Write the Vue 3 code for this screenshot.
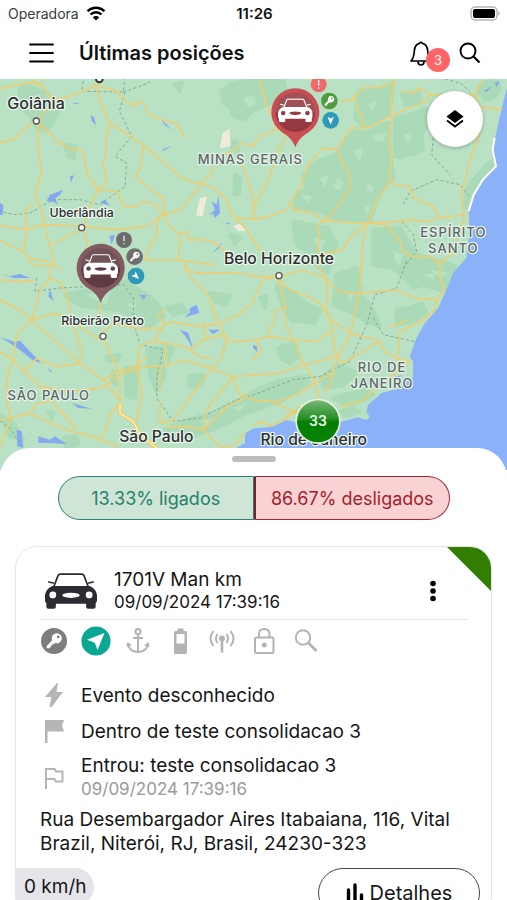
<script setup>
import { ref } from 'vue'

const alerts = ref(3)
const vehicle = {
  name: '1701V Man km',
  updated: '09/09/2024 17:39:16',
  address: 'Rua Desembargador Aires Itabaiana, 116, Vital Brazil, Niterói, RJ, Brasil, 24230-323',
  speed: '0 km/h'
}

/* Map artwork is split in four tiles, each with its own origin. */
const tiles = [
  {
    x: 0, y: 0,
    roads: [
      'M0 193L40 185L70 155L108 128L118 120L145 88L150 60L130 25L95 5',
      'M0 32L80 14L130 20',
      'M150 65L190 60L245 42L285 20L350 40L380 72L405 85L412 68L432 78L445 110L500 130L530 135L553 178',
      'M285 20L305 80L330 135L395 178L440 210L480 245L540 295L575 313L605 315L640 330L680 365L690 400L705 420L740 455L762 490',
      'M330 135L318 180L320 220L308 260L320 300L310 325L295 335L270 385L248 448L265 510',
      'M115 135L115 220L125 280L105 345L125 400L140 470L165 560',
      'M115 135L150 165L170 190L210 212L248 218L262 290L295 335L350 340L370 385L410 385L430 370L465 380L490 410',
      'M430 205L420 270L405 295L460 340L490 360L495 410L540 395L605 318L635 285L640 240L700 220L725 195L762 205',
      'M0 442L80 455L130 440L245 445L350 455L440 445L490 410L510 445L540 470L560 460L565 485L600 485L640 490L690 530',
      'M95 378L75 400L80 455L70 520L30 505L0 485',
      'M70 520L85 540L140 550L180 575',
      'M248 455L200 475L160 500',
      'M475 415L470 470L440 520L435 546L530 546L640 560',
      'M540 470L535 546',
      'M725 255L755 340L762 400',
      'M705 420L762 422'
    ]
  },
  {
    x: 759, y: 0,
    roads: [
      'M425 5L415 50L415 80L410 180L415 250L408 300L430 322L470 325L480 360L540 385L560 420L635 410',
      'M410 310L370 370L345 430L330 480L325 570',
      'M265 70L300 65L330 30L380 28L425 15',
      'M305 55L315 100L328 115L325 135L340 145',
      'M665 50L530 50L520 70L490 80L410 115L345 150L290 150L275 180L255 215L210 210L165 260L145 320L115 370L100 395L50 415L0 425',
      'M115 375L120 395L180 405L215 430L250 428L280 435L345 435L440 430L480 425L520 432L560 420',
      'M255 215L268 255L290 290L290 330L250 390L215 430L192 440L200 470L190 546',
      'M345 435L290 480L270 515L210 530L160 560',
      'M345 435L400 440L440 490L450 520L475 535L530 535L560 560L600 520L625 450L635 420L625 350L650 250L680 170L680 90L665 50L685 10',
      'M660 85L745 95',
      'M450 40L490 45L490 30L510 35L530 50',
      'M20 10L40 80L60 120L70 150L90 160L95 180L60 260L45 310L10 370L0 420',
      'M0 200L30 170L70 155',
      'M0 485L30 530'
    ]
  },
  {
    x: 0, y: 546,
    roads: [
      'M0 120L60 150L95 180L240 310L310 360L360 420',
      'M0 60L60 65L100 62',
      'M85 0L100 18L150 15L150 55L180 65L205 120L220 200L240 250L240 310',
      'M150 55L120 90L110 130L95 180L50 220L40 300L20 350L20 400L30 480L0 560',
      'M95 180L160 160L200 170L240 200L290 235L340 190L410 205L480 205L510 185L600 200L660 190L720 160L762 125',
      'M120 380L200 395L290 385L320 375L365 340L440 320L500 318L550 300L620 320L700 350L762 345',
      'M300 130L300 190',
      'M310 235L340 300L360 345L360 430',
      'M310 360L350 335L410 318',
      'M0 275L40 300L120 380L210 485L225 505',
      'M70 335L110 295L170 320L240 310',
      'M495 145L475 170L495 190L460 245L420 255L410 320L425 400L410 480',
      'M460 245L540 255L570 270L600 290L630 295',
      'M570 270L610 240L660 225L700 245L762 240',
      'M550 0L570 50L620 100L640 150L655 190L680 235L665 290L600 370L520 480L480 490L480 430',
      'M550 25L590 40L690 38L762 45',
      'M610 190L620 240',
      'M360 430L330 460L320 500L300 546',
      'M0 480L90 460L200 510L280 530L355 560',
      'M90 460L110 430L150 425',
      'M610 510L615 460L640 420L700 350L715 400L762 420',
      'M500 500L560 500L610 510L660 560L700 558L735 520',
      'M610 510L680 440L740 410',
      'M480 320L480 390',
      'M495 255L500 310',
      'M410 320L440 290'
    ]
  },
  {
    x: 759, y: 546,
    roads: [
      'M0 50L70 50L110 90L155 105L200 130L235 180L290 220L375 240L395 275L440 300',
      'M75 60L95 130L100 200L125 245L145 300L185 365L195 420',
      'M80 50L150 30L210 50L260 95L310 100L430 90L490 115L545 118',
      'M325 0L320 100L290 225L250 300L235 360L215 400',
      'M0 120L30 60L75 50',
      'M0 240L50 230L120 240L190 245L240 210L220 150L225 90L215 50L190 10',
      'M0 345L80 340L150 315L250 290L235 210',
      'M250 290L270 310L320 280L375 245',
      'M560 0L560 50L575 90L550 120L545 150L510 180L440 215L435 300L470 300',
      'M0 420L60 425L130 460',
      'M60 430L130 405L200 360L240 340',
      'M265 440L330 420L350 400L400 360L470 305',
      'M0 495L30 485L50 498L90 480L130 455',
      'M410 200L440 192L460 178',
      'M40 230L60 190L70 150L95 140',
      'M0 300L25 275L10 240',
      'M100 470L140 440L190 430'
    ]
  }
]

const forests = [
  'M60 30L90 25L140 45L175 95L165 125L140 160L110 150L90 110L60 90Z',
  'M665 40L700 15L762 5L850 0L860 50L800 80L762 95L730 125L700 115L690 85L670 75Z',
  'M705 290L720 300L718 345L703 350Z',
  'M1075 40L1130 35L1180 15L1175 60L1165 110L1120 135L1090 145L1065 120Z',
  'M1010 230L1030 190L1060 160L1100 165L1140 140L1168 135L1170 220L1180 300L1150 330L1130 370L1110 425L1060 425L1000 420L960 400L885 385L890 350L920 330L910 290L950 250Z',
  'M880 430L930 440L985 450L1010 500L990 540L985 585L950 560L930 530L890 500Z',
  'M1185 120L1230 110L1280 90L1285 130L1265 170L1268 215L1220 240L1185 235Z',
  'M1205 48L1255 42L1262 72L1215 82Z',
  'M1445 15L1490 8L1500 30L1480 60L1455 65L1435 40Z',
  'M1400 330L1450 270L1480 245L1478 270L1450 305L1420 345L1405 395L1394 380Z',
  'M1120 455L1200 450L1225 490L1250 530L1320 550L1380 570L1365 620L1330 640L1270 620L1240 630L1215 600L1180 570L1120 560Z',
  'M1010 590L1070 570L1085 640L1120 700L1140 745L1100 730L1050 700L1000 680Z',
  'M830 625L880 645L920 680L960 695L945 735L900 730L875 730L850 690Z',
  'M835 810L885 795L895 835L870 855L845 845Z',
  'M1190 695L1230 690L1265 675L1280 705L1240 730L1190 740Z',
  'M195 650L250 640L320 620L380 610L420 640L450 655L480 690L490 715L450 745L410 730L370 700L300 690L250 685L220 670Z',
  'M630 645L690 655L680 680L645 670Z',
  'M375 870L415 870L405 960L380 955Z',
  'M440 815L480 810L495 890L470 940L450 890Z',
  'M565 895L610 890L605 920L570 925Z',
  'M495 1055L550 1030L600 1015L650 1000L700 975L762 940L830 910L920 895L925 918L850 965L800 985L740 1005L690 1030L640 1055L590 1070L540 1090Z',
  'M960 905L1010 860L1070 885L1030 920L975 930Z',
  'M0 1010L40 1035L70 1085L30 1075Z',
  'M190 1080L230 1075L235 1100L200 1110Z',
  'M1000 960L1100 935L1120 950L1050 985Z',
  'M195 200L225 205L220 240L205 235Z', 'M525 20L545 15L540 40Z',
  'M685 195L710 190L715 230Z', 'M320 835L360 830L350 850L325 848Z',
  'M500 690L540 680L560 700L520 710Z', 'M690 470L720 480L705 500Z',
  'M145 1000L160 1005L155 1022Z', 'M340 880L350 920L335 910Z',
  'M490 800L520 810L505 850Z', 'M780 660L800 655L795 690Z',
  'M1020 1000L1050 990L1080 1000L1040 1015Z'
]

const patches = [
  'M430 220L470 230L450 260Z', 'M730 60L762 50L770 80L745 90Z',
  'M1010 300L1030 310L1020 340L1000 330Z', 'M1150 360L1230 350L1220 390L1150 385Z',
  'M1190 250L1240 230L1260 260L1200 275Z', 'M1120 170L1160 165L1150 190L1125 188Z',
  'M1090 600L1140 610L1120 680L1090 650Z', 'M1230 660L1300 640L1290 670Z',
  'M940 480L980 490L960 520Z', 'M260 650L330 640L320 680Z',
  'M1100 310L1120 325L1118 345L1100 335Z', 'M1210 170L1235 165L1225 195Z',
  'M1180 520L1210 530L1200 560L1185 550Z', 'M1270 590L1310 585L1300 605Z',
  'M960 300L985 290L975 330Z', 'M1060 220L1090 210L1080 250Z',
  'M1100 80L1130 70L1120 100Z', 'M380 680L410 670L405 700Z',
  'M600 1030L640 1020L620 1045Z', 'M1040 640L1060 650L1050 675Z',
  'M905 350L940 355L920 375Z', 'M1290 575L1350 585L1320 600Z',
  'M700 990L740 975L720 1000Z', 'M1090 390L1110 380L1105 410Z'
]

const waters = [
  'M272 112L282 118L288 142L276 130Z', 'M217 73L240 77L225 79Z',
  'M140 368L150 350L190 335L180 350L165 362L175 380L160 372Z',
  'M480 120L515 155L495 142Z', 'M486 215L515 203L492 218Z', 'M210 295L222 292L213 314Z',
  'M300 372L315 365L330 382L312 378Z', 'M0 375L10 380L8 412L0 410Z',
  'M635 370L650 380L655 350L660 405L645 420L640 408L628 410L645 395Z',
  'M675 433L690 436L684 440Z', 'M638 525L668 490L655 512Z', 'M328 475L345 470L335 500Z',
  'M0 778L45 792L60 788L85 815L125 855L100 848L65 820L30 795Z',
  'M145 870L158 882L148 880Z', 'M150 630L160 670L145 655Z',
  'M418 650L440 652L430 665Z', 'M570 690L590 680L598 705L575 712L555 718L570 702Z',
  'M540 755L565 765L580 815L560 780Z', 'M625 755L660 755L640 768Z',
  'M115 1075L150 1085L165 1075L200 1098L150 1095L115 1095Z', 'M215 975L275 992L235 990Z',
  'M50 1055L65 1060L70 1110L52 1105Z', 'M0 587L30 595L60 588L90 600L40 600Z',
  'M1450 40L1475 25L1460 42Z', 'M1484 15L1500 8L1490 28Z',
  'M1185 895L1210 892L1190 900Z', 'M759 800L770 805L772 822L759 810Z'
]

const borders = [
  'M250 10L245 40L370 42L375 0', 'M370 42L420 25L450 12',
  'M375 42L358 100L395 175L345 235L380 255L375 325L300 380L240 365L160 365L90 405L40 410L0 400',
  'M110 600L105 640L180 630L370 620L400 660L400 730L420 800L490 815L470 900L470 960L520 1030L600 1020L700 970L762 950L880 905L960 895L1050 850L1100 740L1125 650L1190 630L1220 546',
  'M1120 720L1150 770L1250 792',
  'M1320 0L1380 15L1410 40', 'M1300 180L1295 230L1350 290',
  'M1210 380L1230 340L1310 305L1380 320L1410 360',
  'M1205 430L1240 470L1250 520L1210 570',
  'M0 1030L30 1050L55 1090'
]

const towns = [
  { name: 'Goiânia', x: 108, y: 92, dotX: 109, dotY: 129, size: 48 },
  { name: 'Uberlândia', x: 245, y: 418, dotX: 245, dotY: 449, size: 37 },
  { name: 'Belo Horizonte', x: 837, y: 558, dotX: 837, dotY: 593, size: 47 },
  { name: 'Ribeirão Preto', x: 308, y: 742, dotX: 309, dotY: 775, size: 37 },
  { name: 'São Paulo', x: 469, y: 1091, size: 47 },
  { name: 'Rio de Janeiro', x: 941, y: 1100, size: 47 }
]

const states = [
  { name: 'MINAS GERAIS', x: 751, y: 259 },
  { name: 'ESPÍRITO', x: 1360, y: 476 },
  { name: 'SANTO', x: 1360, y: 525 },
  { name: 'SÃO PAULO', x: 146, y: 967 },
  { name: 'RIO DE', x: 1146, y: 882 },
  { name: 'JANEIRO', x: 1146, y: 930 }
]

const pins = [
  { x: 886, y: 103, outer: '#c94d53', inner: '#953840', badges: ['#f0696b', '#509b3c', '#2f9ab8'], turn: 180 },
  { x: 302, y: 570, outer: '#84595f', inner: '#5c3c42', badges: ['#6b6b6b', '#6f6d6d', '#2f9ab8'], turn: 135 }
]
</script>

<template>
  <div class="app">
    <svg class="defs" aria-hidden="true">
      <symbol id="car" viewBox="0 0 153 105">
        <path d="M25 42L38 8Q40 3 45 3H108Q113 3 115 8L128 42" fill="none" stroke="currentColor" stroke-width="5" />
        <path d="M11 26L24 29M142 26L129 29" stroke="currentColor" stroke-width="5" stroke-linecap="round" />
        <path fill="currentColor" fill-rule="evenodd" d="M22 38H131Q150 46 153 64V80Q153 86 149 88V99Q149 105 143 105H127Q121 105 121 99V90H32V99Q32 105 26 105H10Q4 105 4 99V88Q0 86 0 80V64Q3 46 22 38ZM13 64a10 10 0 1 0 20 0a10 10 0 1 0 -20 0ZM120 64a10 10 0 1 0 20 0a10 10 0 1 0 -20 0ZM53 61Q76 55 100 61Q104 64 100 69Q76 77 53 69Q49 64 53 61Z" />
      </symbol>
      <symbol id="key" viewBox="0 0 24 24">
        <path fill="currentColor" fill-rule="evenodd" d="M15 3.500a5.500 5.500 0 1 1-2 10.600L11.500 15.500H10V17H8.500V18.500L7 20H4V17.500L10 11.300A5.500 5.500 0 0 1 15 3.500ZM16.500 6a1.500 1.500 0 1 0 .1 0Z" />
      </symbol>
      <symbol id="arrow" viewBox="0 0 24 24">
        <path fill="currentColor" d="M12 4L18 19L12 15.500L6 19Z" />
      </symbol>
    </svg>

    <header class="top">
      <div class="status">
        <span class="carrier">Operadora
          <svg width="20" height="15" viewBox="0 0 20 15" aria-hidden="true">
            <path d="M1.500 5.200A12.200 12.200 0 0 1 18.500 5.200M4.500 8.500A8 8 0 0 1 15.500 8.500" fill="none" stroke="#000" stroke-width="2.400" />
            <path d="M10 14.500L6.800 11.200A4.600 4.600 0 0 1 13.200 11.200Z" />
          </svg>
        </span>
        <span class="time">11:26</span>
        <svg class="battery" width="31" height="15" viewBox="0 0 31 15" aria-hidden="true">
          <rect x="1" y="1" width="26" height="13" rx="4" fill="#fff" stroke="#b5b5b5" stroke-width="1.500" />
          <rect x="3" y="3" width="22" height="9" rx="2" />
          <path d="M28.500 5Q31 7.500 28.500 10Z" fill="#a5a5a5" />
        </svg>
      </div>
      <nav class="bar">
        <button class="icon menu" aria-label="Menu">
          <svg width="26" height="20" viewBox="0 0 26 20"><path d="M2 1.500H25M2 10H25M2 18.500H25" stroke="#000" stroke-width="1.800" stroke-linecap="round" /></svg>
        </button>
        <h1>Últimas posições</h1>
        <button class="icon bell" aria-label="Alertas">
          <svg width="22" height="25" viewBox="0 0 22 25" fill="none" stroke="#000" stroke-width="1.700">
            <path d="M1 20C3 18 4 16 4.300 10C4.600 5 7 2.800 9.500 2.300Q11 .3 12.500 2.300C15 2.800 17.400 5 17.700 10C18 16 19 18 21 20Z" stroke-linejoin="round" />
            <path d="M8 20.500Q8 24 11 24Q14 24 14 20.500" />
          </svg>
          <span class="count">{{ alerts }}</span>
        </button>
        <button class="icon" aria-label="Buscar">
          <svg width="22" height="22" viewBox="0 0 22 22" fill="none" stroke="#000"><circle cx="9" cy="9" r="7.500" stroke-width="1.900" /><path d="M14.500 14.500L20.500 20.500" stroke-width="2.200" /></svg>
        </button>
      </nav>
    </header>

    <section class="map">
      <svg class="canvas" viewBox="0 3 1521 1173" role="img" aria-label="Mapa dos veículos">
        <defs>
          <linearGradient id="gloss" x1="0" y1="0" x2="0" y2="1">
            <stop offset="0" stop-color="#79b878" />
            <stop offset="0.450" stop-color="#238c22" />
            <stop offset="0.520" stop-color="#037d02" />
            <stop offset="1" stop-color="#078505" />
          </linearGradient>
        </defs>
        <rect width="1521" height="1180" fill="#b9e2c5" />
        <path v-for="d in forests" :key="d" :d="d" fill="#aadab7" stroke="#aadab7" stroke-width="12" stroke-linejoin="round" />
        <path v-for="d in patches" :key="d" :d="d" fill="#b9e2c5" />
        <path d="M668 165L688 152L692 205L660 210Z M600 360L620 355L608 415L588 412Z M700 445L720 437L738 460L715 458Z" fill="#f0ecdc" />
        <path d="M1521 30L1504 95L1494 140L1478 215L1488 265L1448 305L1419 350L1406 400L1409 460L1399 540L1359 586L1339 636L1314 691L1274 736L1249 781L1229 836L1239 850L1239 896L1199 931L1144 946L1104 981L1099 1001L1109 1016L1099 1026L1074 1018L1024 1031L959 1036L900 1035L859 1026L819 1046L762 1051L735 1066L735 1095L690 1120L680 1180H1521Z" fill="#8bb1f8" />
        <path d="M1484 180L1478 215L1488 265L1450 303L1421 350L1406 400" fill="none" stroke="#fff" stroke-width="6" stroke-linejoin="round" />
        <path v-for="d in waters" :key="d" :d="d" fill="#83a9f3" />
        <path v-for="d in borders" :key="d" :d="d" class="border" />
        <g v-for="tile in tiles" :key="`${tile.x}-${tile.y}`" :transform="`translate(${tile.x} ${tile.y})`">
          <path v-for="d in tile.roads" :key="d" :d="d" class="road" />
        </g>
        <path d="M360 976L360 1006L400 1031L420 1070L470 1110" fill="none" stroke="#f4cb62" stroke-width="11" />
        <path d="M360 976L360 1006L400 1031L420 1070L470 1110" fill="none" stroke="#fff0ba" stroke-width="4" />
        <circle cx="298" cy="3" r="10" fill="#fff" stroke="#333" stroke-width="6" />

        <g v-for="s in states" :key="s.name">
          <text class="state" :x="s.x" :y="s.y">{{ s.name }}</text>
        </g>
        <g v-for="t in towns" :key="t.name">
          <circle v-if="t.dotX" :cx="t.dotX" :cy="t.dotY" r="9" fill="#fff" stroke="#555" stroke-width="4" />
          <text class="town" :x="t.x" :y="t.y" :font-size="t.size">{{ t.name }}</text>
        </g>

        <g v-for="p in pins" :key="p.x" :transform="`translate(${p.x} ${p.y})`">
          <path d="M0 105C-10 78-24 70-42 58A72 72 0 1 1 42 58C24 70 10 78 0 105Z" :fill="p.outer" />
          <circle r="59" :fill="p.inner" />
          <path d="M-59 0A59 59 0 0 1 59 0Z" fill="#fff" opacity=".12" />
          <use href="#car" x="-52" y="-42" width="104" height="72" color="#fff" />
          <g transform="translate(70 -84)">
            <circle r="24" :fill="p.badges[0]" />
            <path d="M0 -13V4M0 9V13" stroke="#e9e9e9" stroke-width="4" />
          </g>
          <g transform="translate(102 -34)" color="#fff">
            <circle r="25" :fill="p.badges[1]" />
            <use href="#key" x="-21" y="-21" width="42" height="42" />
          </g>
          <g transform="translate(106 24)" color="#fff">
            <circle r="25" :fill="p.badges[2]" />
            <use href="#arrow" x="-19" y="-19" width="38" height="38" :transform="`rotate(${p.turn})`" />
          </g>
        </g>

        <g transform="translate(954 1030)">
          <circle r="68" fill="#e8f2e4" />
          <circle r="63" fill="url(#gloss)" />
          <text class="cluster" y="14">33</text>
        </g>
      </svg>
      <button class="layers" aria-label="Camadas">
        <svg width="20" height="20" viewBox="0 0 20 20"><path d="M10 1L18.500 7.500L10 14L1.500 7.500Z" /><path d="M2 11.500L10 17.500L18 11.500" fill="none" stroke="#000" stroke-width="1.800" /></svg>
      </button>
    </section>

    <main class="sheet">
      <div class="handle"></div>
      <div class="split">
        <button class="on">13.33% ligados</button>
        <button class="off">86.67% desligados</button>
      </div>

      <article class="card">
        <span class="corner"></span>
        <div class="head">
          <svg class="car" width="52" height="36" aria-hidden="true"><use href="#car" /></svg>
          <div class="title">
            <h2>{{ vehicle.name }}</h2>
            <time>{{ vehicle.updated }}</time>
          </div>
          <button class="icon more" aria-label="Mais opções">
            <svg width="8" height="22" viewBox="0 0 8 22"><circle cx="4" cy="3.500" r="2.800" /><circle cx="4" cy="11" r="2.800" /><circle cx="4" cy="18.500" r="2.800" /></svg>
          </button>
        </div>

        <div class="flags" aria-hidden="true">
          <svg viewBox="0 0 30 30"><circle cx="15" cy="15" r="13" fill="#7d7d7d" /><use href="#key" x="4" y="4" width="22" height="22" color="#fff" /></svg>
          <svg viewBox="0 0 30 30"><circle cx="15" cy="15" r="14.600" fill="#0aa893" /><path d="M23.500 7L16.500 24L13.800 16.700L6 13.800Z" fill="#fff" /></svg>
          <svg viewBox="0 0 30 30" class="line"><circle cx="15" cy="5.500" r="2.600" /><path d="M15 8V26M10 12H20M4.500 18Q7 26 15 26Q23 26 25.500 18" /><path d="M3.500 21L4.500 16L9 19.500ZM26.500 21L25.500 16L21 19.500Z" fill="#b3b3b3" stroke="none" /></svg>
          <svg viewBox="0 0 30 30"><path fill="#b3b3b3" fill-rule="evenodd" d="M12.500 2.500H18.500V5H20.500Q22 5 22 6.500V26.500Q22 28 20.500 28H10.500Q9 28 9 26.500V6.500Q9 5 10.500 5H12.500ZM11.500 8V17.500H19.500V8Z" /></svg>
          <svg viewBox="0 0 30 30" class="line"><circle cx="15" cy="12.500" r="2" fill="#b3b3b3" /><path d="M15 14V26.500" stroke-width="2.600" /><path d="M10.500 8Q7.500 12.500 10.500 17M19.500 8Q22.500 12.500 19.500 17M6.500 5Q.5 12.500 6.500 20M23.500 5Q29.500 12.500 23.500 20" /></svg>
          <svg viewBox="0 0 30 30" class="line"><rect x="6" y="11.500" width="18.500" height="15.500" rx="1.500" /><path d="M10 11.500V8Q10 3 15.200 3Q20.500 3 20.500 8V11.500" /><circle cx="15.200" cy="19" r="1.500" fill="#b3b3b3" /></svg>
          <svg viewBox="0 0 30 30" class="line"><circle cx="12" cy="11.500" r="7.200" /><path d="M17.500 17L25.500 25" stroke-width="2.600" /></svg>
        </div>

        <ul class="events">
          <li>
            <svg viewBox="0 0 24 26" aria-hidden="true"><path d="M15 1L3 15H9.500L7.500 25H9.500L21 10H14.500L16 1Z" fill="#b5b5b5" /></svg>
            <span>Evento desconhecido</span>
          </li>
          <li>
            <svg viewBox="0 0 24 26" aria-hidden="true"><path d="M3 2H22L20 7.500L22 13.500H5.500V25H3Z" fill="#b5b5b5" /></svg>
            <span>Dentro de teste consolidacao 3</span>
          </li>
          <li class="entry">
            <svg viewBox="0 0 24 26" aria-hidden="true"><path d="M4 24V4H12.500L14 6.500H20.500V16.500H14L12.500 14H4" fill="none" stroke="#b5b5b5" stroke-width="2" /></svg>
            <span>Entrou: teste consolidacao 3<time>09/09/2024 17:39:16</time></span>
          </li>
        </ul>

        <p class="address">{{ vehicle.address }}</p>

        <footer class="foot">
          <span class="speed">{{ vehicle.speed }}</span>
          <button class="details">
            <svg width="18" height="20" viewBox="0 0 18 20" aria-hidden="true"><path d="M2.500 7V18M9 2V18M15.500 12V18" stroke="#000" stroke-width="3.400" stroke-linecap="round" /></svg>
            Detalhes
          </button>
        </footer>
      </article>
    </main>
  </div>
</template>

<style>
body {
  background: #fff;
}
</style>

<style scoped>
.app {
  display: flex;
  flex-direction: column;
  height: 100vh;
  overflow: hidden;
  background: #fff;
  color: #161616;
  font-family: Inter, "Liberation Sans", sans-serif;
}
.defs {
  position: absolute;
  width: 0;
  height: 0;
}
button {
  font: inherit;
  color: inherit;
  cursor: pointer;
}
h1, h2, p, ul {
  margin: 0;
  padding: 0;
}
svg {
  display: block;
  flex: none;
}
.top {
  flex: none;
}
.status {
  display: grid;
  grid-template-columns: 1fr auto 1fr;
  align-items: center;
  height: 27px;
  padding: 0 6px 0 8px;
  font-size: 14px;
}
.carrier {
  display: flex;
  align-items: center;
  gap: 7px;
  color: #3a3a3a;
}
.time {
  font-size: 15px;
  font-weight: 600;
  color: #111;
}
.battery {
  justify-self: end;
}
.bar {
  display: flex;
  align-items: center;
  height: 52px;
  padding: 0 26px 0 28px;
}
.bar h1 {
  flex: 1;
  margin-left: 25px;
  font-size: 20px;
  font-weight: 600;
  color: #111;
}
.icon {
  display: flex;
  padding: 0;
  border: 0;
  background: none;
}
.bell {
  position: relative;
  margin-right: 27px;
}
.count {
  position: absolute;
  left: 16px;
  top: 7px;
  width: 24px;
  border-radius: 12px;
  background: #ff6467;
  color: #fff;
  font-size: 13px;
  line-height: 24px;
  text-align: center;
}
.map {
  position: relative;
  flex: none;
}
.canvas {
  width: 100%;
  height: auto;
}
.road {
  fill: none;
  stroke: #ecce74;
  stroke-width: 5;
  stroke-linejoin: round;
  stroke-linecap: round;
}
.border {
  fill: none;
  stroke: #86a893;
  stroke-width: 3;
  stroke-dasharray: 9 7;
}
.town, .state {
  text-anchor: middle;
  paint-order: stroke;
  stroke-linejoin: round;
}
.town {
  font-weight: 500;
  fill: #2b2f31;
  stroke: #eef7ee;
  stroke-width: 7;
}
.state {
  font-size: 39px;
  font-weight: 500;
  letter-spacing: 3px;
  fill: #5b6567;
  stroke: #e4f3e7;
  stroke-width: 7;
}
.cluster {
  text-anchor: middle;
  font-size: 42px;
  font-weight: 600;
  fill: #e5f5e3;
}
.layers {
  position: absolute;
  top: 12px;
  right: 24px;
  display: grid;
  place-items: center;
  width: 56px;
  height: 56px;
  border: 0;
  border-radius: 50%;
  background: #fff;
  box-shadow: 0 1px 4px rgba(0, 0, 0, 0.25);
}
.sheet {
  position: relative;
  flex: 1;
  min-height: 0;
  margin-top: -22px;
  padding: 8px 15px 0;
  overflow: hidden;
  border-radius: 30px 30px 0 0;
  background: #fff;
}
.handle {
  width: 44px;
  height: 6px;
  margin: 0 auto;
  border-radius: 3px;
  background: #bdbdbd;
}
.split {
  display: flex;
  height: 44px;
  margin: 14px 42px 26px 43px;
}
.split button {
  flex: 1;
  padding: 0;
  border: 1px solid;
  font-size: 18px;
}
.split .on {
  border-color: #2a8272;
  border-radius: 22px 0 0 22px;
  background: #cfe5d5;
  color: #25816e;
}
.split .off {
  border-color: #a52736;
  border-left: 2px solid #7a2030;
  border-radius: 0 22px 22px 0;
  background: #f9d2d3;
  color: #a51e2c;
}
.card {
  position: relative;
  overflow: hidden;
  border: 1px solid #e7e7e7;
  border-radius: 22px;
}
.corner {
  position: absolute;
  top: 0;
  right: 0;
  width: 44px;
  height: 44px;
  background: #327e00;
  clip-path: polygon(0 0, 100% 0, 100% 100%);
}
.head {
  display: flex;
  align-items: center;
  gap: 17px;
  margin: 0 23px 0 24px;
  padding: 22px 0 6px 5px;
  border-bottom: 1px solid #e3e3e3;
}
.car {
  color: #2b2b31;
}
.title {
  flex: 1;
}
.title h2 {
  font-size: 19px;
  font-weight: 400;
  line-height: 22px;
}
.title time {
  display: block;
  font-size: 17px;
  line-height: 22px;
}
.more {
  margin-right: 31px;
}
.flags {
  display: flex;
  gap: 12px;
  padding: 6px 24px 0 23px;
}
.flags svg {
  width: 30px;
  height: 30px;
}
.line {
  fill: none;
  stroke: #b3b3b3;
  stroke-width: 2;
}
.events {
  display: flex;
  flex-direction: column;
  padding: 21px 24px 0 26px;
  list-style: none;
  font-size: 19px;
}
.events li {
  display: flex;
  align-items: center;
  gap: 15px;
  min-height: 36px;
}
.events svg {
  width: 24px;
  height: 26px;
}
.entry {
  padding-top: 5px;
  line-height: 24px;
}
.events time {
  display: block;
  font-size: 17px;
  line-height: 23px;
  color: #9a9a9a;
}
.address {
  margin: 7px 24px 12px;
  font-size: 19px;
  line-height: 24px;
}
.foot {
  display: flex;
  justify-content: space-between;
  align-items: flex-start;
  padding-right: 11px;
}
.speed {
  padding: 0 8px;
  border-radius: 0 19px 19px 0;
  background: #e5e4e9;
  font-size: 19px;
  line-height: 38px;
}
.details {
  display: flex;
  align-items: center;
  justify-content: center;
  gap: 6px;
  width: 162px;
  height: 50px;
  border: 1px solid #444;
  border-radius: 25px;
  background: #fff;
  font-size: 20px;
}
</style>
